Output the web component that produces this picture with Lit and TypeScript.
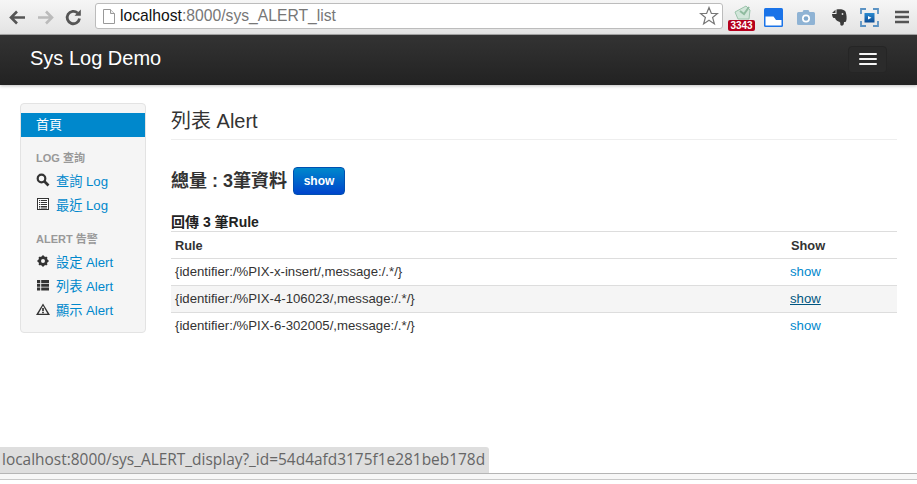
import { LitElement, html, css } from 'lit';
import { customElement } from 'lit/decorators.js';

const rules = [
  { text: '{identifier:/%PIX-x-insert/,message:/.*/}', hover: false },
  { text: '{identifier:/%PIX-4-106023/,message:/.*/}', hover: true },
  { text: '{identifier:/%PIX-6-302005/,message:/.*/}', hover: false },
];

@customElement('app-root')
export class AppRoot extends LitElement {
  static styles = css`
    :host {
      display: flex;
      flex-direction: column;
      position: relative;
      height: 484px;
      width: 917px;
      overflow: hidden;
      background: #fff;
      font-family: "Liberation Sans", "Noto Sans CJK TC", sans-serif;
      color: #333;
    }
    a { color: #0088cc; text-decoration: none; }

    /* browser toolbar */
    .toolbar {
      height: 34px;
      flex: none;
      display: flex;
      align-items: center;
      background: linear-gradient(#f6f6f6, #e3e3e3);
      border-bottom: 1px solid #a8a8a8;
    }
    .nav-btns {
      display: flex;
      gap: 9px;
      padding-left: 8px;
      width: 95px;
      box-sizing: border-box;
      flex: none;
    }
    .nav-btns svg { width: 19px; height: 19px; display: block; }
    .omnibox {
      width: 628px;
      height: 26px;
      margin-top: -2px;
      box-sizing: border-box;
      background: #fff;
      border: 1px solid #bcbcbc;
      border-radius: 3px;
      display: flex;
      align-items: center;
      padding: 0 3px 0 7px;
      font-size: 15.7px;
      color: #777;
      flex: none;
    }
    .omnibox .host { color: #111; }
    .omnibox .url { flex: 1; padding-left: 5px; white-space: nowrap; }
    .ext {
      display: flex;
      align-items: center;
      flex: 1;
      height: 100%;
    }
    .ext > * { flex: none; }
    .badge-wrap { position: relative; width: 28px; height: 30px; margin-left: 5px; }
    .badge-icon { position: absolute; left: 3px; top: 1px; }
    .badge {
      position: absolute;
      left: 0;
      bottom: 1px;
      width: 27px;
      height: 11px;
      background: #b5001d;
      color: #fff;
      border-radius: 2px;
      font: bold 10px/11px "Liberation Sans", sans-serif;
      text-align: center;
    }
    .ext-tabs { margin-left: 8px; }
    .ext-camera { margin-left: 14px; }
    .ext-elephant { margin-left: 17px; }
    .ext-capture { margin-left: 13px; }
    .ext-menu { margin-left: 16px; }

    /* site navbar */
    .navbar {
      height: 50px;
      flex: none;
      background: linear-gradient(#333333, #222222);
      display: flex;
      align-items: center;
      justify-content: space-between;
      padding: 0 30px 0 30px;
      box-shadow: 0 1px 3px rgba(0, 0, 0, 0.25);
      position: relative;
    }
    .brand { color: #fff; font-size: 20px; line-height: 24px; margin-top: -4px; }
    .toggle {
      width: 39px;
      height: 27px;
      box-sizing: border-box;
      background: #2b2b2b;
      border: 1px solid #252525;
      border-radius: 4px;
      display: flex;
      flex-direction: column;
      justify-content: center;
      align-items: center;
      gap: 3px;
      margin-top: -2px;
    }
    .toggle i { display: block; width: 18px; height: 2px; background: #f5f5f5; border-radius: 1px; }

    /* page body */
    .page {
      flex: 1;
      display: flex;
      align-items: flex-start;
      gap: 25px;
      padding: 18px 20px 0;
      min-height: 0;
    }
    .well {
      width: 126px;
      height: 230px;
      box-sizing: border-box;
      flex: none;
      background: #f5f5f5;
      border: 1px solid #e3e3e3;
      border-radius: 4px;
      padding-top: 9px;
      font-size: 13px;
    }
    .well .active {
      display: block;
      height: 24px;
      line-height: 24px;
      padding-left: 15px;
      background: #0088cc;
      color: #fff;
    }
    .nav-header {
      font-size: 11px;
      font-weight: bold;
      color: #999;
      padding-left: 15px;
      line-height: 16px;
      margin-top: 13px;
      margin-bottom: 2px;
    }
    .nav-header.second { margin-top: 15px; }
    .item {
      display: flex;
      align-items: center;
      height: 24px;
      padding-left: 15px;
      font-size: 13.2px;
    }
    .item svg { width: 14px; height: 14px; margin-right: 6px; flex: none; }

    .main { flex: 1; min-width: 0; padding-top: 4px; }
    .title {
      font-size: 20px;
      font-weight: normal;
      line-height: 28px;
      margin: 0;
      padding-bottom: 4px;
      border-bottom: 1px solid #eeeeee;
      color: #333;
    }
    .total {
      display: flex;
      align-items: center;
      margin-top: 23px;
      font-size: 18px;
      font-weight: bold;
      color: #333;
    }
    .btn {
      margin: 4px 0 0 6px;
      width: 52px;
      height: 28px;
      box-sizing: border-box;
      background: linear-gradient(#0088cc, #0044cc);
      border: 1px solid #0050b0;
      border-radius: 4px;
      color: #fff;
      font: bold 12px/26px "Liberation Sans", sans-serif;
      text-align: center;
    }
    .count {
      margin-top: 19px;
      font-size: 14px;
      font-weight: bold;
      line-height: 16px;
      color: #222;
    }
    .table {
      border-top: 1px solid #dddddd;
      margin-top: 1px;
      font-size: 13.2px;
    }
    .row {
      display: grid;
      grid-template-columns: 615px 1fr;
      height: 27px;
      box-sizing: border-box;
      align-items: center;
      padding: 0 0 2px 4px;
    }
    .row + .row { border-top: 1px solid #dddddd; }
    .row.head { font-weight: bold; font-size: 12.8px; height: 26px; padding-bottom: 0; }
    .row.head .show-col { padding-left: 1px; }
    .row.hover { background: #f5f5f5; }
    .row.hover a { color: #005580; text-decoration: underline; }

    /* browser status bubble and window edge */
    .status {
      position: absolute;
      left: 0;
      top: 447px;
      width: 489px;
      height: 26px;
      box-sizing: border-box;
      padding-left: 2px;
      background: #dedede;
      border-top-right-radius: 3px;
      color: #666;
      font: 15.45px/25px "Open Sans", sans-serif;
      white-space: nowrap;
    }
    .edge {
      position: absolute;
      left: 0;
      right: 0;
      top: 473px;
      height: 5px;
      border-top: 1px solid #b5b5b5;
      border-bottom: 1px solid #c8c8c8;
      background: #f7f7f7;
    }
  `;

  render() {
    return html`
      <div class="toolbar">
        <div class="nav-btns">
          <svg viewBox="0 0 19 19"><path d="M9 3.500 3 9.500l6 6M3.500 9.500H17" fill="none" stroke="#555" stroke-width="2.600"/></svg>
          <svg viewBox="0 0 19 19"><path d="M10 3.500l6 6-6 6M15.500 9.500H2" fill="none" stroke="#bbb" stroke-width="2.600"/></svg>
          <svg viewBox="0 0 19 19"><path d="M15.500 10.500A6.200 6.200 0 1 1 13.600 5" fill="none" stroke="#555" stroke-width="2.800"/><path d="M10.500 7.800h6.300V1.500z" fill="#555"/></svg>
        </div>
        <div class="omnibox">
          <svg width="12" height="15" viewBox="0 0 12 15"><path d="M.5.500h7l4 4v10H.5z" fill="#fff" stroke="#999"/><path d="M7.500.500v4h4" fill="#eee" stroke="#999"/></svg>
          <span class="url"><span class="host">localhost</span>:8000/sys_ALERT_list</span>
          <svg width="20" height="20" viewBox="0 0 20 20"><path d="M10 1.500l2.400 6h6.100l-4.900 4 1.800 6.400L10 14.200l-5.400 3.700 1.800-6.400-4.900-4h6.100z" fill="#fff" stroke="#777" stroke-width="1.200"/></svg>
        </div>
        <div class="ext">
          <div class="badge-wrap">
            <svg class="badge-icon" width="24" height="20" viewBox="0 0 24 20"><path d="M4 9l11-6 4 4-1 9H7z" fill="#d2e6da" stroke="#9cc4ac"/><path d="M9 8l4 3 5-7" fill="none" stroke="#8fbb9f" stroke-width="2"/></svg>
            <span class="badge">3343</span>
          </div>
          <svg class="ext-tabs" width="19" height="19" viewBox="0 0 19 19"><rect width="19" height="19" rx="1.500" fill="#1a73e8"/><path d="M1.500 8.500h8l2.500 3.500h5.500v5.500h-16z" fill="#fff"/></svg>
          <svg class="ext-camera" width="18" height="16" viewBox="0 0 18 16"><path d="M1.500 3h4l1-2h5l1 2h4A1.500 1.500 0 0 1 18 4.500V14.500A1.500 1.500 0 0 1 16.500 16h-15A1.500 1.500 0 0 1 0 14.500V4.500A1.500 1.500 0 0 1 1.500 3z" fill="#8fb3d4"/><circle cx="9" cy="9.500" r="4" fill="#fff"/><circle cx="9" cy="9.500" r="2.300" fill="#7fa8cc"/></svg>
          <svg class="ext-elephant" width="15" height="17" viewBox="0 0 15 17"><path d="M0 4 3.500.8V4H0zM4.500.5C7 0 12 0 13.500 2.500c1.200 3 1.500 7 .7 9.500-.4 1.300-1.300 1-2.200 1 0 1.500-.3 3-1.300 3.500-1.400.5-2.700-.4-2.400-1.800.2-1.300-.7-1.900-1.800-2.200C5 12 3.500 11 3 9H1.500C.5 8 0 6.500 0 5h4.500z" fill="#3a3a3a"/><circle cx="10.500" cy="5" r=".9" fill="#ddd"/></svg>
          <svg class="ext-capture" width="19" height="19" viewBox="0 0 19 19"><defs><linearGradient id="cap" x1="0" y1="0" x2="0" y2="1"><stop offset="0" stop-color="#2a8ad0"/><stop offset="1" stop-color="#0b4c96"/></linearGradient></defs><path d="M1 6V1h5M13 1h5v5M18 13v5h-5M6 18H1v-5" fill="none" stroke="#5b93c4" stroke-width="1.800"/><rect x="4.500" y="5" width="10" height="9.500" fill="url(#cap)"/><path d="M8 8l3.500 1.700L8 11.500z" fill="#fff"/></svg>
          <svg class="ext-menu" width="14" height="14" viewBox="0 0 14 14"><path d="M0 2h14M0 7h14M0 12h14" stroke="#555" stroke-width="2.400"/></svg>
        </div>
      </div>

      <div class="navbar">
        <span class="brand">Sys Log Demo</span>
        <span class="toggle"><i></i><i></i><i></i></span>
      </div>

      <div class="page">
        <div class="well">
          <a class="active">首頁</a>
          <div class="nav-header">LOG 查詢</div>
          <div class="item">
            <svg viewBox="0 0 14 14"><circle cx="5.500" cy="5.500" r="3.800" fill="none" stroke="#333" stroke-width="2.200"/><path d="M8.500 8.500l4 4" stroke="#333" stroke-width="2.600"/></svg>
            <a>查詢 Log</a>
          </div>
          <div class="item">
            <svg viewBox="0 0 14 14"><rect x="1.500" y="1.500" width="11" height="11" fill="#fff" stroke="#333"/><path d="M3 3.500h8M3 5.500h8M3 7.500h8M3 9.500h8M3 11h8" stroke="#333"/><path d="M4.500 2v10" stroke="#fff" stroke-width=".7"/></svg>
            <a>最近 Log</a>
          </div>
          <div class="nav-header second">ALERT 告警</div>
          <div class="item">
            <svg viewBox="0 0 14 14"><circle cx="7" cy="7" r="3.400" fill="none" stroke="#333" stroke-width="2.800"/><path d="M7 1.500v2M7 10.500v2M1.500 7h2M10.500 7h2M3.100 3.100l1.400 1.400M9.500 9.500l1.400 1.400M3.100 10.900l1.400-1.400M9.500 4.500l1.400-1.400" stroke="#333" stroke-width="2"/></svg>
            <a>設定 Alert</a>
          </div>
          <div class="item">
            <svg viewBox="0 0 14 14"><path d="M1 2h3.200v3H1zM5.200 2H13v3H5.200zM1 5.800h3.200v3H1zM5.200 5.800H13v3H5.200zM1 9.600h3.200v3H1zM5.200 9.600H13v3H5.200z" fill="#333"/></svg>
            <a>列表 Alert</a>
          </div>
          <div class="item">
            <svg viewBox="0 0 14 14"><path d="M7 1.500 0 13h14z" fill="#333"/><path d="M7 3.800 2.500 11.800h9z" fill="#f5f5f5"/><path d="M7 6v3.200M7 10v1.300" stroke="#333" stroke-width="1.700"/></svg>
            <a>顯示 Alert</a>
          </div>
        </div>

        <div class="main">
          <h2 class="title">列表 Alert</h2>
          <div class="total">總量 : 3筆資料 <a class="btn">show</a></div>
          <div class="count">回傳 3 筆Rule</div>
          <div class="table">
            <div class="row head"><span>Rule</span><span class="show-col">Show</span></div>
            ${rules.map(
              (r) => html`
                <div class="row ${r.hover ? 'hover' : ''}">
                  <span>${r.text}</span><a>show</a>
                </div>
              `,
            )}
          </div>
        </div>
      </div>

      <div class="status">localhost:8000/sys_ALERT_display?_id=54d4afd3175f1e281beb178d</div>
      <div class="edge"></div>
    `;
  }
}
